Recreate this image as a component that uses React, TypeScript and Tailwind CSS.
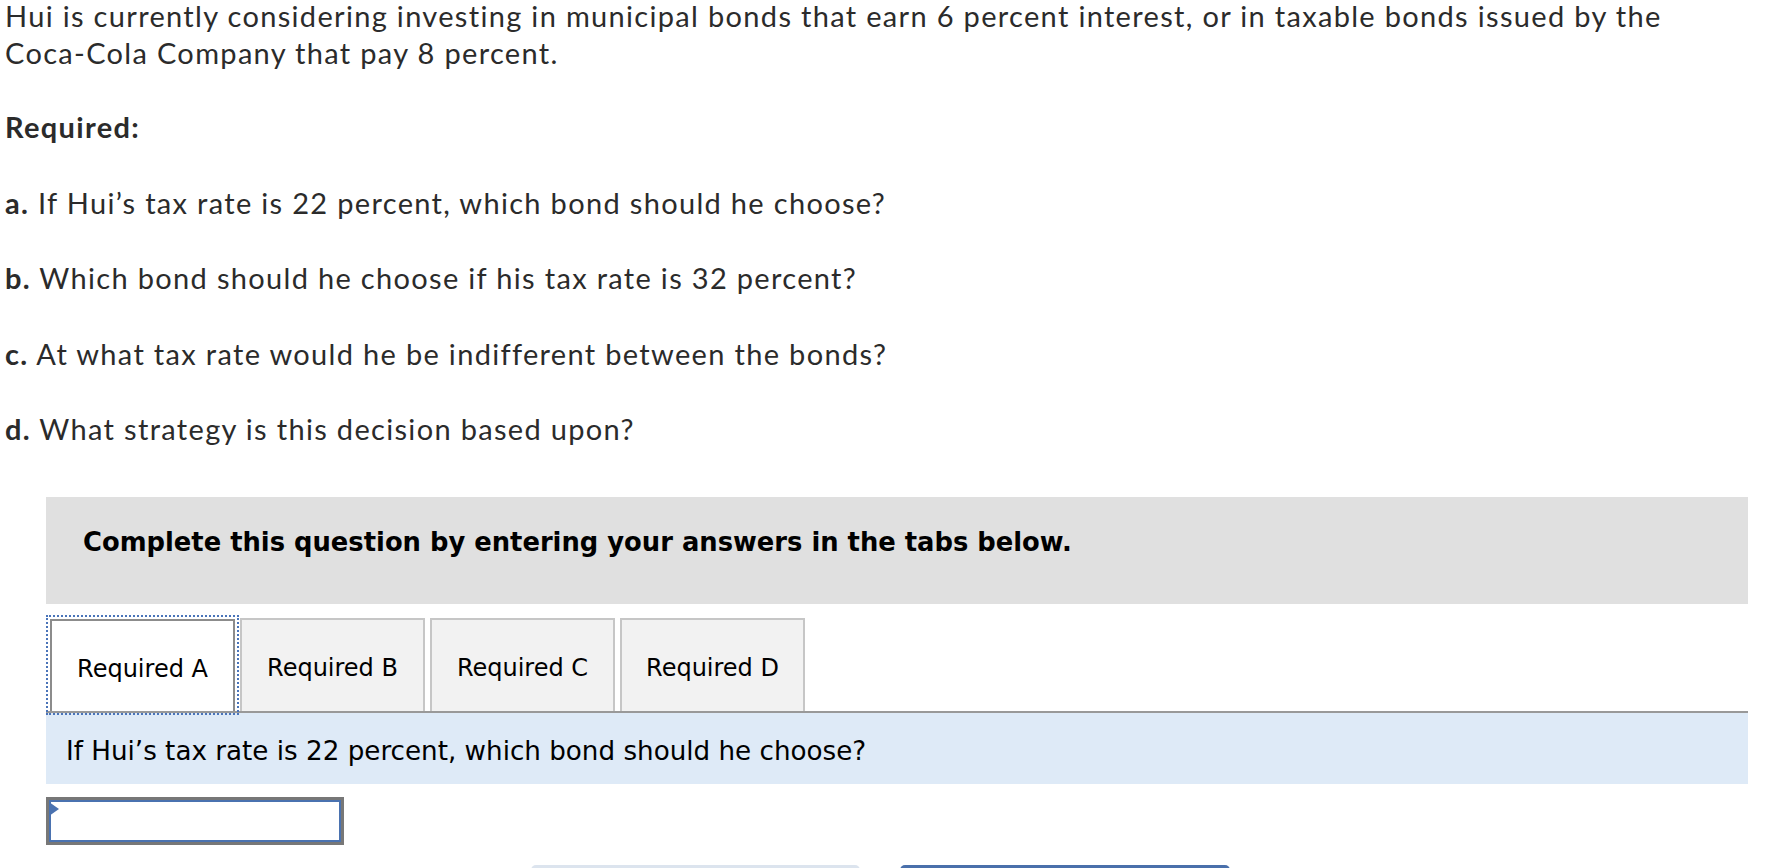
import React from "react";

const questions = [
  { label: "a.", text: "If Hui’s tax rate is 22 percent, which bond should he choose?" },
  { label: "b.", text: "Which bond should he choose if his tax rate is 32 percent?" },
  { label: "c.", text: "At what tax rate would he be indifferent between the bonds?" },
  { label: "d.", text: "What strategy is this decision based upon?" },
];

const tabs = ["Required A", "Required B", "Required C", "Required D"];

const App = () => {
  return (
    <div className="min-h-screen w-full bg-white">
      {/* problem text */}
      <div className="pl-[5px] text-[#2b2b2b] font-['Lato',sans-serif] text-[29px] leading-[37px] tracking-[1.32px]">
        <p className="-mt-[3px]">
          Hui is currently considering investing in municipal bonds that earn 6 percent interest, or in taxable bonds issued by the
          <br />
          Coca-Cola Company that pay 8 percent.
        </p>
        <p className="mt-[37px] font-bold">Required:</p>
        {questions.map((q) => (
          <p key={q.label} className="mt-[38.5px]">
            <span className="font-bold">{q.label}</span> {q.text}
          </p>
        ))}
      </div>

      {/* answer area */}
      <div className="ml-[46px] mt-[50px] w-[1702px] font-['DejaVu_Sans',Verdana,sans-serif] text-black">
        <div className="bg-[#e0e0e0] pl-[37px] pt-[30px] pb-[47px] text-[25.8px] leading-[30px] font-bold">
          Complete this question by entering your answers in the tabs below.
        </div>

        <div className="mt-[14px] flex items-end gap-[5px] border-b-2 border-[#999999] pl-[4px]">
          {tabs.map((t, i) =>
            i === 0 ? (
              <div
                key={t}
                className="flex h-[92px] w-[185px] items-center justify-center border-2 border-b-0 border-[#8c8c8c] bg-white pt-[5px] text-[24px] leading-[28px] outline-2 outline-offset-2 outline-dotted outline-[#4a74b9]"
              >
                {t}
              </div>
            ) : (
              <div
                key={t}
                className="flex h-[93px] w-[185px] items-center justify-center border-2 border-b-0 border-[#c6c6c6] bg-[#f2f2f2] pt-[5px] text-[24px] leading-[28px]"
              >
                {t}
              </div>
            )
          )}
        </div>

        <div className="bg-[#deeaf7] pl-[20px] pt-[23px] pb-[18px] text-[26.2px] leading-[30px]">
          If Hui’s tax rate is 22 percent, which bond should he choose?
        </div>

        <div className="relative mt-[13px] h-[48px] w-[298px] border-[3px] border-[#777777] bg-white shadow-[inset_0_0_0_2px_#4a72b0]">
          <svg className="absolute left-0 top-[2px]" width="10" height="14" viewBox="0 0 10 14">
            <polygon points="0,0 10,7 0,14" fill="#4a72b0" />
          </svg>
        </div>

        <div className="ml-[485px] mt-[20px] flex gap-[40px]">
          <div className="h-[44px] w-[329px] rounded-t-[5px] bg-[#dce4ee]" />
          <div className="h-[44px] w-[330px] rounded-t-[5px] bg-[#4a70ab]" />
        </div>
      </div>
    </div>
  );
};

export default App;
